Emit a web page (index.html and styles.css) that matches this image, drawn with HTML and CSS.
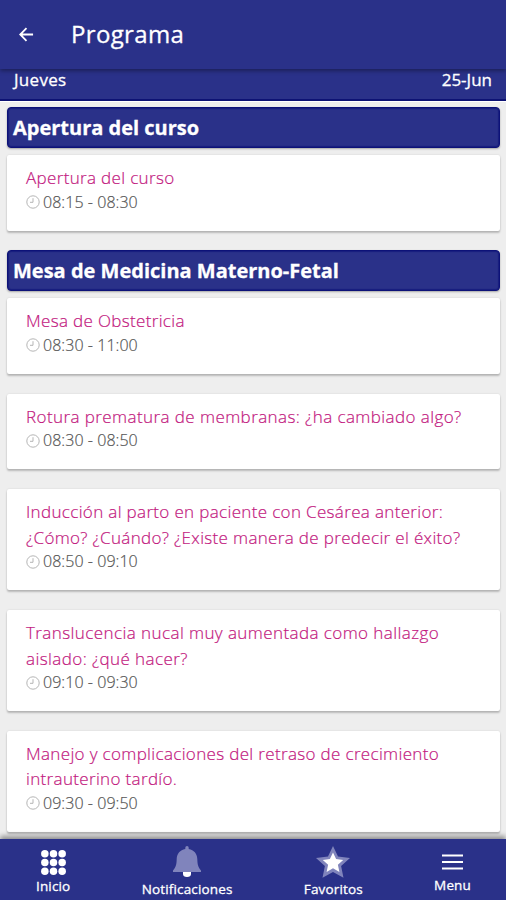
FILE: index.html
```
<!DOCTYPE html>
<html lang="es">
<head>
<meta charset="utf-8">
<title>Programa</title>
<link rel="stylesheet" href="styles.css">
</head>
<body>
<svg class="defs" aria-hidden="true">
  <symbol id="clock" viewBox="0 0 14 14"><circle cx="7" cy="7" r="6.2"/><path d="M7 3.2V7.3H4"/></symbol>
</svg>
<div class="app">
  <header class="topbar">
    <svg class="back" viewBox="0 0 16 16"><path d="M15 8H1.5M8 1.3L1.3 8L8 14.7"/></svg>
    <h1 class="title">Programa</h1>
  </header>
  <div class="day"><span>Jueves</span><span>25-Jun</span></div>
  <main class="list">
    <h2 class="section">Apertura del curso</h2>
    <article class="card"><h3>Apertura del curso</h3><p class="time"><svg><use href="#clock"/></svg>08:15 - 08:30</p></article>
    <h2 class="section">Mesa de Medicina Materno-Fetal</h2>
    <article class="card"><h3>Mesa de Obstetricia</h3><p class="time"><svg><use href="#clock"/></svg>08:30 - 11:00</p></article>
    <article class="card"><h3 class="wide">Rotura prematura de membranas: ¿ha cambiado algo?</h3><p class="time"><svg><use href="#clock"/></svg>08:30 - 08:50</p></article>
    <article class="card"><h3>Inducción al parto en paciente con Cesárea anterior:<br>¿Cómo? ¿Cuándo? ¿Existe manera de predecir el éxito?</h3><p class="time"><svg><use href="#clock"/></svg>08:50 - 09:10</p></article>
    <article class="card"><h3 class="wide">Translucencia nucal muy aumentada como hallazgo<br>aislado: ¿qué hacer?</h3><p class="time"><svg><use href="#clock"/></svg>09:10 - 09:30</p></article>
    <article class="card"><h3>Manejo y complicaciones del retraso de crecimiento<br>intrauterino tardío.</h3><p class="time"><svg><use href="#clock"/></svg>09:30 - 09:50</p></article>
  </main>
  <nav class="tabs">
    <a class="tab home"><svg viewBox="0 0 26 26"><g fill="#fff"><circle cx="4" cy="4" r="3.9"/><circle cx="13" cy="4" r="3.9"/><circle cx="22" cy="4" r="3.9"/><circle cx="4" cy="13" r="3.9"/><circle cx="13" cy="13" r="3.9"/><circle cx="22" cy="13" r="3.9"/><circle cx="4" cy="22" r="3.9"/><circle cx="13" cy="22" r="3.9"/><circle cx="22" cy="22" r="3.9"/></g></svg><span>Inicio</span></a>
    <a class="tab bell"><svg viewBox="0 0 28 32"><path fill="#fff" d="M10 26h8v2q0 3-4 3t-4-3z"/><path fill="#8084bc" d="M12.300 1.700a1.700 1.700 0 0 1 3.400 0V3C21 4 24 7.500 24.300 13C24.500 18.500 25 21 28 24.500V26H0V24.500C3 21 3.500 18.500 3.700 13C4 7.500 7 4 12.300 3z"/></svg><span>Notificaciones</span></a>
    <a class="tab star"><svg viewBox="0 0 34 32"><path fill="#8084bc" d="M17 0l5 10.500 12 1.400-8.900 8 2.400 11.800L17 26 6.500 31.700l2.400-11.800L0 11.900l12-1.400z"/><path fill="#fff" d="M17 6.500l3.100 6.600 7.100.8-5.300 4.900 1.500 7.100-6.400-3.600-6.400 3.600 1.500-7.100-5.300-4.900 7.100-.8z"/></svg><span>Favoritos</span></a>
    <a class="tab menu"><svg viewBox="0 0 21 16"><path stroke="#fff" stroke-width="2" d="M0 1.500h21M0 8h21M0 14.500h21"/></svg><span>Menu</span></a>
  </nav>
</div>
</body>
</html>
```
FILE: styles.css
```
* { box-sizing: border-box; margin: 0; padding: 0; }
body { background: #eee; font-family: "Open Sans", sans-serif; }
.defs { display: none; }
#clock { fill: none; stroke: #b5b5b5; stroke-width: 1; }
.app { height: 900px; display: flex; flex-direction: column; overflow: hidden; }
.topbar { height: 69px; flex: none; background: #2a3189; color: #fff; display: flex; align-items: center; padding-left: 19px; box-shadow: 0 2px 4px rgba(0,0,0,.35); z-index: 1; }
.back { width: 15px; height: 15px; fill: none; stroke: #fff; stroke-width: 1.900; }
.title { font-size: 24px; font-weight: 400; line-height: 32px; margin: -1px 0 0 37px; letter-spacing: .35px; -webkit-text-stroke: .3px #fff; }
.day { height: 32px; flex: none; background: #2a3189; border-bottom: 2px solid #0d1274; color: #fff; display: flex; justify-content: space-between; padding: 0 14px; font-size: 17px; line-height: 21px; -webkit-text-stroke: .3px #fff; }
.day span:first-child { letter-spacing: .3px; }
.list { flex: 1; min-height: 0; overflow: hidden; padding: 5px 6px 0; border-top: 1px solid #fff; }
.section { height: 41px; margin: 0 0 7px 1px; width: 493px; padding-left: 5px; background: #2a3189; border: 1px solid #0d1278; border-radius: 4px; box-shadow: inset 0 0 1px 1px rgba(10,15,120,.6), 0 1px 2px rgba(0,0,0,.3); color: #fff; font-size: 20px; line-height: 40px; font-weight: 700; white-space: nowrap; -webkit-text-stroke: .3px #fff; }
.card { margin: 0 0 19.900px 1px; width: 493px; padding: 10px 19px 17px; background: #fff; border-radius: 2px; box-shadow: 0 2px 2px rgba(0,0,0,.22), 0 0 2px rgba(0,0,0,.12); }
.card h3 { color: #c2187e; font-size: 17px; line-height: 25.500px; font-weight: 300; letter-spacing: .34px; white-space: nowrap; -webkit-text-stroke: .2px #c2187e; }
.card h3.wide { letter-spacing: .42px; }
.time { display: flex; align-items: center; color: #555; font-size: 16px; font-weight: 300; line-height: 23px; letter-spacing: .05px; -webkit-text-stroke: .2px #555; }
.time svg { width: 14px; height: 14px; margin-right: 3px; }
.tabs { height: 61px; flex: none; background: #2a3189; color: #fff; display: flex; justify-content: space-between; padding: 0 35px 0 36px; box-shadow: 0 -3px 5px rgba(0,0,0,.4); z-index: 1; }
.tab { display: flex; flex-direction: column; align-items: center; font-size: 13.500px; line-height: 18px; letter-spacing: .15px; -webkit-text-stroke: .3px #fff; }
.tab svg { flex: none; -webkit-text-stroke: 0; }
.home svg { width: 25px; height: 25px; margin: 11px 0 2px; }
.bell svg { width: 28px; height: 32px; margin: 7px 0 2px; }
.star svg { width: 34px; height: 32px; margin: 7px 0 2px; }
.menu svg { width: 21px; height: 16px; margin: 15px 0 6px; }
```
